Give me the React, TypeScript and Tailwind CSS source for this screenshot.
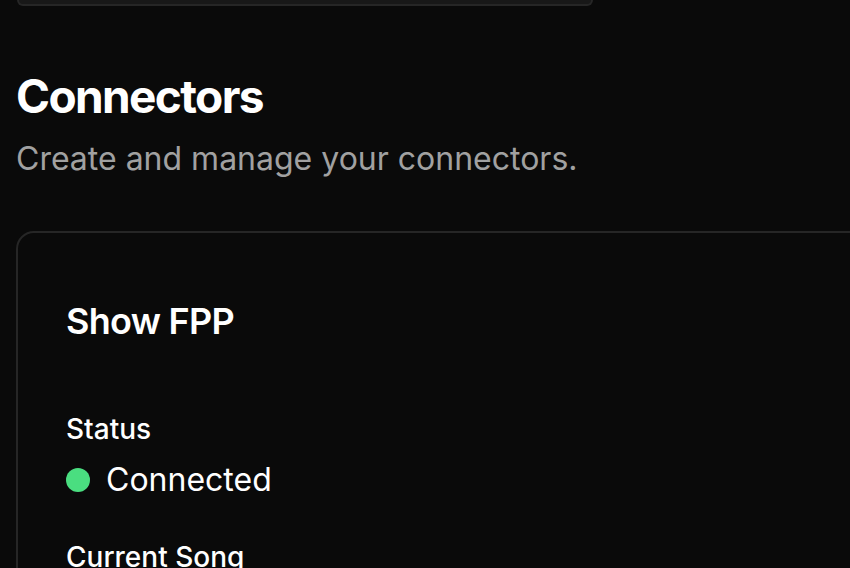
export default function App() {
  return (
    <div
      className="h-[568px] w-[850px] overflow-hidden bg-[#0a0a0a] text-white"
      style={{ fontFamily: "Inter, 'Noto Sans', sans-serif" }}
    >
      {/* bottom edge of the previous panel */}
      <div className="ml-[17px] h-[6px] w-[576px] rounded-b-[14px] border-x-2 border-b-2 border-[#262626] bg-[#181818]" />

      <div className="px-[16px] pt-[62px]">
        <h1 className="text-[46px] font-bold leading-[56px] tracking-[-0.035em]">Connectors</h1>
        <p className="mt-[11px] text-[32px] leading-[48px] text-[#a1a1a1]">
          Create and manage your connectors.
        </p>

        <div className="mt-[48px] mr-[-40px] h-[400px] rounded-[18px] border-2 border-[#262626] px-[48px] pt-[64px]">
          <h2 className="text-[36px] font-semibold leading-[48px] tracking-[-0.02em]">Show FPP</h2>

          <div className="mt-[64px] flex flex-col">
            <span className="text-[28px] font-medium leading-[40px]">Status</span>
            <div className="mt-[7px] flex items-center gap-[16px]">
              <span className="h-[24px] w-[24px] rounded-full bg-[#4ade80]" />
              <span className="text-[32px] leading-[48px]">Connected</span>
            </div>
          </div>

          <div className="mt-[33px] flex flex-col">
            <span className="text-[28px] font-medium leading-[40px]">Current Song</span>
          </div>
        </div>
      </div>
    </div>
  );
}
